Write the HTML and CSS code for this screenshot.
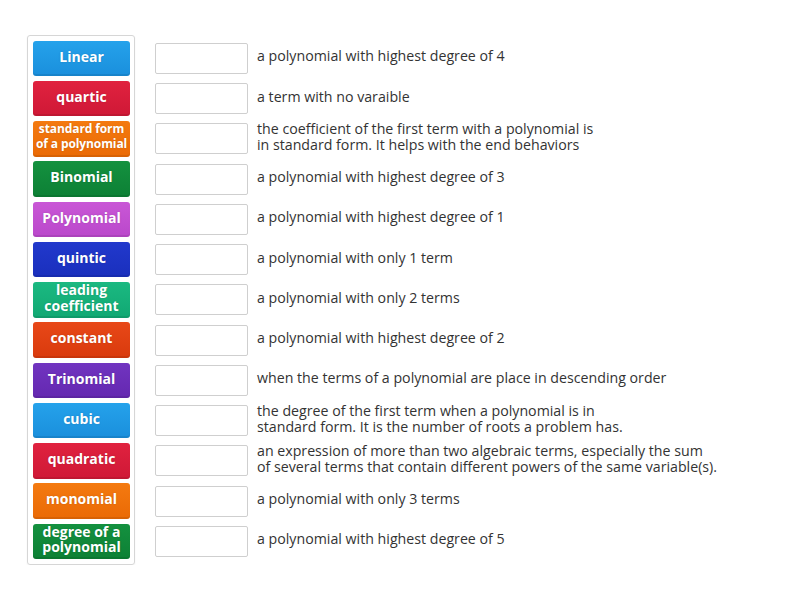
FILE: index.html
```html
<!DOCTYPE html>
<html lang="en">
<head>
<meta charset="UTF-8" />
<title>Match up</title>
<link rel="stylesheet" href="styles.css">
</head>
<body>
<div class="board">
  <div class="tiles">
    <div class="tile blue">Linear</div>
    <div class="tile red">quartic</div>
    <div class="tile orange small">standard form of a polynomial</div>
    <div class="tile green">Binomial</div>
    <div class="tile pink">Polynomial</div>
    <div class="tile navy">quintic</div>
    <div class="tile teal">leading coefficient</div>
    <div class="tile vermilion">constant</div>
    <div class="tile purple">Trinomial</div>
    <div class="tile blue">cubic</div>
    <div class="tile red">quadratic</div>
    <div class="tile orange">monomial</div>
    <div class="tile green">degree of a polynomial</div>
  </div>
  <div class="targets">
    <div class="row"><div class="slot"></div><p>a polynomial with highest degree of 4</p></div>
    <div class="row"><div class="slot"></div><p>a term with no varaible</p></div>
    <div class="row"><div class="slot"></div><p>the coefficient of the first term with a polynomial is<br>in standard form. It helps with the end behaviors</p></div>
    <div class="row"><div class="slot"></div><p>a polynomial with highest degree of 3</p></div>
    <div class="row"><div class="slot"></div><p>a polynomial with highest degree of 1</p></div>
    <div class="row"><div class="slot"></div><p>a polynomial with only 1 term</p></div>
    <div class="row"><div class="slot"></div><p>a polynomial with only 2 terms</p></div>
    <div class="row"><div class="slot"></div><p>a polynomial with highest degree of 2</p></div>
    <div class="row"><div class="slot"></div><p>when the terms of a polynomial are place in descending order</p></div>
    <div class="row"><div class="slot"></div><p>the degree of the first term when a polynomial is in<br>standard form. It is the number of roots a problem has.</p></div>
    <div class="row"><div class="slot"></div><p>an expression of more than two algebraic terms, especially the sum<br>of several terms that contain different powers of the same variable(s).</p></div>
    <div class="row"><div class="slot"></div><p>a polynomial with only 3 terms</p></div>
    <div class="row"><div class="slot"></div><p>a polynomial with highest degree of 5</p></div>
  </div>
</div>
</body>
</html>
```

FILE: styles.css
```css
:root {
  --row-h: 35.5px;
  --row-gap: 4.75px;
}

body {
  margin: 0;
  background: #fff;
  font-family: "Open Sans", "Liberation Sans", sans-serif;
  color: #333;
}

.board {
  display: flex;
  align-items: flex-start;
  padding: 35px 0 0 27px;
}

/* Tile column */
.tiles {
  display: flex;
  flex-direction: column;
  gap: var(--row-gap);
  width: 97px;
  padding: 4.5px 4px 5px 5px;
  border: 1px solid #d6d6d6;
  border-radius: 3px;
  box-shadow: 0 1px 2px rgba(0, 0, 0, 0.06);
}

.tile {
  box-sizing: border-box;
  height: var(--row-h);
  padding-bottom: 4px;
  display: flex;
  align-items: center;
  justify-content: center;
  text-align: center;
  border-radius: 3px;
  color: #fff;
  font-weight: 700;
  font-size: 14px;
  line-height: 15.5px;
  text-shadow: 0 0 2px rgba(0, 0, 0, 0.15);
  box-shadow: inset 0 -2px 0 rgba(0, 0, 0, 0.08);
}
.tile.small {
  font-size: 12px;
  line-height: 14.5px;
  letter-spacing: -0.1px;
}

.blue { background: linear-gradient(#25a2eb, #1a8fdc); }
.red { background: linear-gradient(#e0223f, #cf1836); }
.orange { background: linear-gradient(#f47a10, #ea6a05); }
.green { background: linear-gradient(#14913f, #0d8035); }
.pink { background: linear-gradient(#c957d6, #ba48cb); }
.navy { background: linear-gradient(#2139cc, #1a2fbd); }
.teal { background: linear-gradient(#1bb981, #11a873); }
.vermilion { background: linear-gradient(#e84818, #d93a0d); }
.purple { background: linear-gradient(#7134c0, #6428b0); }

/* Targets column */
.targets {
  display: flex;
  flex-direction: column;
  gap: var(--row-gap);
  padding-top: 5.5px;
  margin-left: 20px;
}

.row {
  height: var(--row-h);
  display: flex;
  align-items: center;
}

.slot {
  width: 91px;
  height: 29px;
  flex: none;
  border: 1px solid #cfcfcf;
  border-radius: 2px;
  background: #fff;
}

.row p {
  margin: 0 0 0 9px;
  padding-bottom: 4px;
  font-size: 14.2px;
  line-height: 16px;
  color: #333;
}
```
